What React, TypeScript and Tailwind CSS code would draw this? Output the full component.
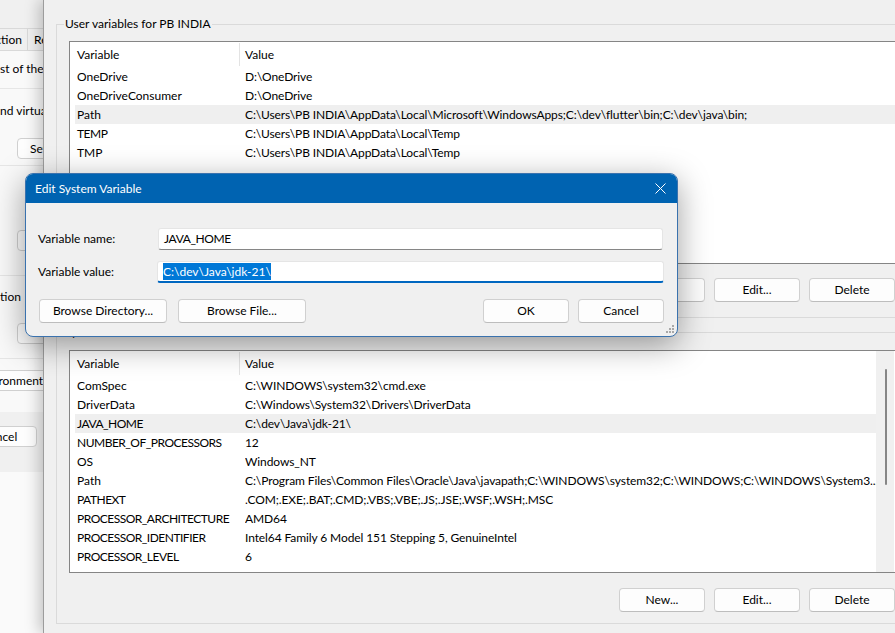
import React from "react";

const userVars: [string, string][] = [
  ["OneDrive", "D:\\OneDrive"],
  ["OneDriveConsumer", "D:\\OneDrive"],
  ["Path", "C:\\Users\\PB INDIA\\AppData\\Local\\Microsoft\\WindowsApps;C:\\dev\\flutter\\bin;C:\\dev\\java\\bin;"],
  ["TEMP", "C:\\Users\\PB INDIA\\AppData\\Local\\Temp"],
  ["TMP", "C:\\Users\\PB INDIA\\AppData\\Local\\Temp"],
];

const sysVars: [string, string][] = [
  ["ComSpec", "C:\\WINDOWS\\system32\\cmd.exe"],
  ["DriverData", "C:\\Windows\\System32\\Drivers\\DriverData"],
  ["JAVA_HOME", "C:\\dev\\Java\\jdk-21\\"],
  ["NUMBER_OF_PROCESSORS", "12"],
  ["OS", "Windows_NT"],
  ["Path", "C:\\Program Files\\Common Files\\Oracle\\Java\\javapath;C:\\WINDOWS\\system32;C:\\WINDOWS;C:\\WINDOWS\\System3..."],
  ["PATHEXT", ".COM;.EXE;.BAT;.CMD;.VBS;.VBE;.JS;.JSE;.WSF;.WSH;.MSC"],
  ["PROCESSOR_ARCHITECTURE", "AMD64"],
  ["PROCESSOR_IDENTIFIER", "Intel64 Family 6 Model 151 Stepping 5, GenuineIntel"],
  ["PROCESSOR_LEVEL", "6"],
];

function WinButton({ children, className = "" }: { children: React.ReactNode; className?: string }) {
  return (
    <div
      className={`h-[24px] flex items-center justify-center rounded-[4px] border border-[#d0d0d0] border-b-[#bdbdbd] bg-[#fdfdfd] text-[12px] text-black whitespace-nowrap ${className}`}
    >
      {children}
    </div>
  );
}

function VarList({ rows, selected, scroll }: { rows: [string, string][]; selected: number; scroll?: boolean }) {
  return (
    <div className="w-[827px] h-[223px] border border-[#858585] bg-white flex">
      <div className="flex-1 min-w-0 flex flex-col overflow-hidden">
        <div className="h-[25px] flex items-stretch shrink-0">
          <div className="w-[170px] flex items-center pl-[7px] my-[1px] border-r border-[#e3e3e3]">Variable</div>
          <div className="flex-1 flex items-center pl-[5px]">Value</div>
        </div>
        {rows.map(([k, v], i) => {
          const caps = k.length > 3 && k === k.toUpperCase();
          return (
            <div
              key={k + i}
              className={`ml-[5px] h-[19px] flex items-center shrink-0 whitespace-nowrap ${i === selected ? "bg-[#efefef]" : ""}`}
            >
              <div className={`w-[170px] pl-[2px] shrink-0 leading-[19px] ${caps ? "tracking-[-0.5px]" : ""}`}>{k}</div>
              <div className="flex-1 min-w-0 overflow-hidden leading-[19px] tracking-[-0.1px]">{v}</div>
            </div>
          );
        })}
      </div>
      {scroll && (
        <div className="w-[18px] shrink-0 bg-[#f0f0f0] flex justify-center pt-[18px] mr-[1px]">
          <div className="w-[2px] h-[116px] bg-[#868686] rounded-full ml-[1px]" />
        </div>
      )}
    </div>
  );
}

function GroupBox({
  label,
  children,
  className = "",
}: {
  label: string;
  children: React.ReactNode;
  className?: string;
}) {
  return (
    <div className={`relative w-[860px] border border-[#dadada] pl-[12px] ${className}`}>
      <div className="absolute -top-[9px] left-[7px] px-[1px] bg-[#f0f0f0] leading-[16px] text-[12px] text-black">
        {label}
      </div>
      {children}
    </div>
  );
}

function ButtonsRow() {
  return (
    <div className="w-[827px] flex justify-end gap-[9px] pr-[1px]">
      <WinButton className="w-[86px]">New...</WinButton>
      <WinButton className="w-[86px]">Edit...</WinButton>
      <WinButton className="w-[86px]">Delete</WinButton>
    </div>
  );
}

function LeftWindow() {
  return (
    <div className="w-[43px] shrink-0 h-full flex flex-col overflow-hidden bg-[#f0f0f0] text-[12px] text-black whitespace-nowrap">
      <div className="h-[28px] shrink-0" />
      <div className="h-[22px] shrink-0 flex items-stretch">
        <div className="w-[28px] shrink-0 border-r border-t border-[#d9d9d9] flex items-center justify-end pr-[5px]">ction</div>
        <div className="flex-1 border-t border-[#d9d9d9] flex items-center pl-[6px]">Remote</div>
      </div>
      <div className="h-[362px] shrink-0 bg-[#f9f9f9] border-t border-[#d9d9d9] flex flex-col">
        <div className="mt-[10px] leading-[16px]">st of these changes.</div>
        <div className="mt-[11px] border-t border-[#e6e6e6]" />
        <div className="mt-[14px] leading-[16px]">nd virtual memory</div>
        <div className="mt-[19px] ml-[17px] w-[80px] h-[21px] rounded-[4px] border border-[#d0d0d0] bg-[#fdfdfd] flex items-center pl-[12px]">Settings...</div>
        <div className="mt-[6px] border-t border-[#e6e6e6]" />
        <div className="mt-[64px] ml-[17px] w-[80px] h-[21px] rounded-[4px] border border-[#d0d0d0] bg-[#fdfdfd]" />
        <div className="mt-[24px] border-t border-[#e6e6e6]" />
        <div className="mt-[13px] leading-[16px]">tion</div>
        <div className="mt-[18px] ml-[17px] w-[80px] h-[21px] rounded-[4px] border border-[#d0d0d0] bg-[#fdfdfd]" />
        <div className="mt-[14px] border-t border-[#e6e6e6]" />
        <div className="mt-[11px] -ml-[33px] w-[140px] h-[21px] rounded-[4px] border border-[#d0d0d0] bg-[#fdfdfd] flex items-center pl-[8px]">Environment Variables...</div>
      </div>
      <div className="h-[60px] shrink-0 bg-[#f0f0f0] pt-[14px]">
        <div className="-ml-[38px] w-[75px] h-[21px] rounded-[4px] border border-[#d0d0d0] bg-[#fdfdfd] flex items-center justify-center">Cancel</div>
      </div>
      <div className="flex-1 bg-[#fafafa]" />
    </div>
  );
}

function Dialog() {
  return (
    <div className="absolute left-[25px] top-[173px] w-[653px] h-[164px] rounded-[8px] border border-[#3a72ae] bg-[#f0f0f0] overflow-hidden shadow-[0_8px_32px_rgba(0,0,0,0.38)] flex flex-col text-[12px] text-black">
      <div className="h-[29px] shrink-0 bg-[#0063b1] flex items-center justify-between pl-[9px] pr-[10px] text-white">
        <span>Edit System Variable</span>
        <svg width="11" height="11" viewBox="0 0 11 11" className="mr-[1px]">
          <path d="M0.5 0.5 L10.5 10.5 M10.5 0.5 L0.5 10.5" stroke="white" strokeWidth="1" fill="none" />
        </svg>
      </div>
      <div className="flex-1 flex flex-col pl-[12px] pr-[14px] pt-[25px] relative">
        <div className="flex items-center h-[22px]">
          <div className="w-[120px] shrink-0">Variable name:</div>
          <div className="flex-1 h-[22px] bg-white border border-[#e5e5e5] border-b-[#868686] rounded-[3px] flex items-center pl-[5px] tracking-[-0.4px]">
            JAVA_HOME
          </div>
        </div>
        <div className="flex items-center h-[22px] mt-[11px]">
          <div className="w-[119px] shrink-0">Variable value:</div>
          <div className="flex-1 h-[22px] bg-white border border-[#e5e5e5] border-b-2 border-b-[#0067c0] rounded-[3px] flex items-center pl-[5px] -mr-[1px]">
            <span className="bg-[#0078d7] text-white leading-[17px]">C:\dev\Java\jdk-21\</span>
          </div>
        </div>
        <div className="flex items-center mt-[16px] ml-[1px]">
          <WinButton className="w-[128px]">Browse Directory...</WinButton>
          <WinButton className="w-[128px] ml-[11px]">Browse File...</WinButton>
          <div className="flex-1" />
          <WinButton className="w-[86px] border-[#0067c0] border-b-[#0067c0]">OK</WinButton>
          <WinButton className="w-[86px] ml-[9px] -mr-[1px]">Cancel</WinButton>
        </div>
        <div className="absolute right-[3px] bottom-[3px] grid grid-cols-3 gap-[1px]">
          <div className="w-[2px] h-[2px]" />
          <div className="w-[2px] h-[2px]" />
          <div className="w-[2px] h-[2px] bg-[#a8a8a8]" />
          <div className="w-[2px] h-[2px]" />
          <div className="w-[2px] h-[2px] bg-[#a8a8a8]" />
          <div className="w-[2px] h-[2px] bg-[#a8a8a8]" />
          <div className="w-[2px] h-[2px] bg-[#a8a8a8]" />
          <div className="w-[2px] h-[2px] bg-[#a8a8a8]" />
          <div className="w-[2px] h-[2px] bg-[#a8a8a8]" />
        </div>
      </div>
    </div>
  );
}

export default function App() {
  return (
    <div
      className="relative w-[895px] h-[633px] overflow-hidden flex bg-white"
      style={{ fontFamily: '"Segoe UI", Lato, "Noto Sans", sans-serif' }}
    >
      <LeftWindow />
      <div className="relative z-10 shrink-0 w-[880px] h-full bg-[#f0f0f0] border-l border-[#9c9c9c] shadow-[-4px_0_14px_rgba(0,0,0,0.22)] pl-[12px] pt-[24px] text-[12px] text-black">
        <GroupBox label="User variables for PB INDIA" className="pt-[16px] pb-[15px]">
          <VarList rows={userVars} selected={2} />
          <div className="mt-[14px]">
            <ButtonsRow />
          </div>
        </GroupBox>
        <GroupBox label="System variables" className="mt-[14px] pt-[17px] pb-[11px]">
          <VarList rows={sysVars} selected={2} scroll />
          <div className="mt-[15px]">
            <ButtonsRow />
          </div>
        </GroupBox>
      </div>
      <div className="absolute inset-0 z-20 pointer-events-none">
        <Dialog />
      </div>
    </div>
  );
}
